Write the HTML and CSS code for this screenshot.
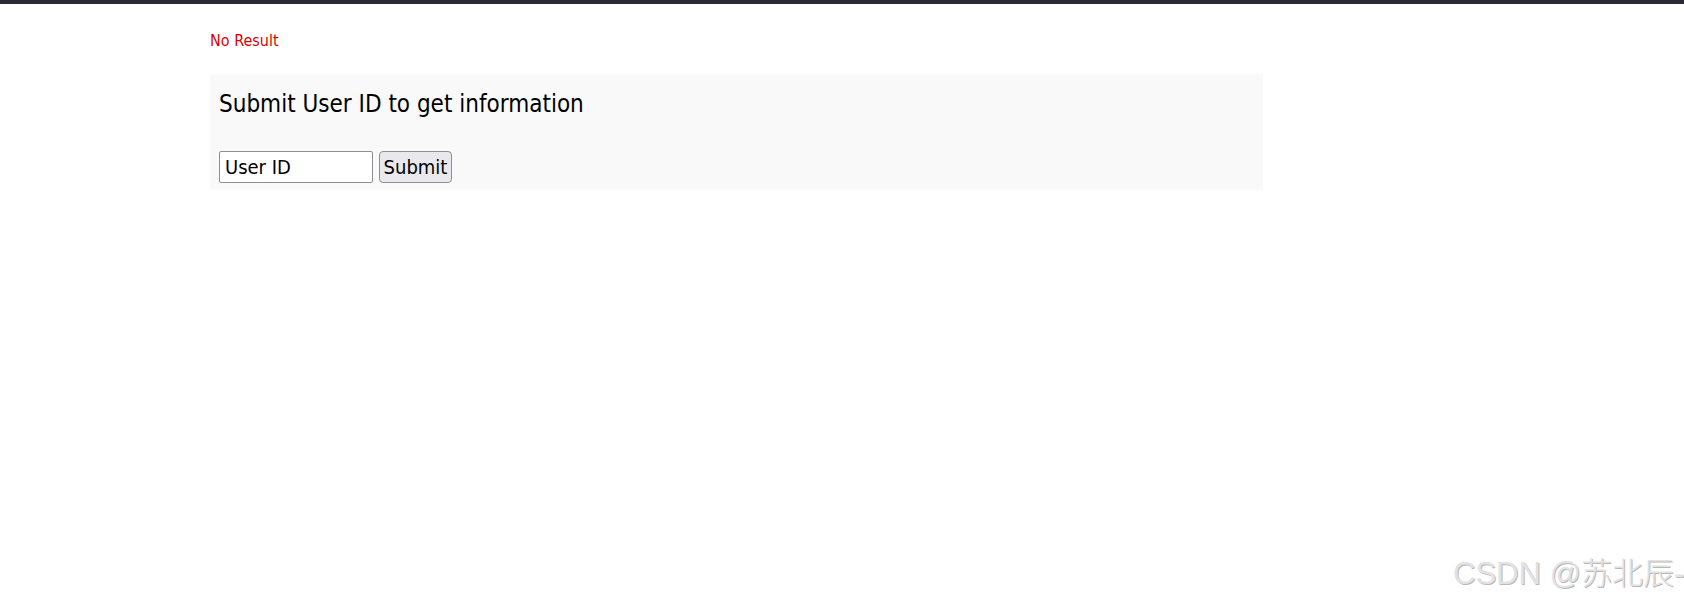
FILE: index.html
```html
<!DOCTYPE html>
<html>
<head>
<meta charset="utf-8">
<link rel="stylesheet" href="styles.css">
</head>
<body>
<div class="topbar"></div>
<main class="page">
  <p class="status">No Result</p>
  <section class="panel">
    <h2 class="title">Submit User ID to get information</h2>
    <form class="form">
      <input class="field" type="text" value="User ID">
      <button class="btn" type="button">Submit</button>
    </form>
  </section>
</main>
<div class="watermark">CSDN @苏北辰-</div>
</body>
</html>
```

FILE: styles.css
```css
html, body {
  margin: 0;
  padding: 0;
  background: #ffffff;
  height: 100%;
}
body {
  font-family: "DejaVu Sans Condensed", "DejaVu Sans", sans-serif;
  overflow: hidden;
  position: relative;
}
.topbar {
  height: 4px;
  background: #2b2a33;
}
.page {
  padding-left: 210px;
  width: 1053px;
}
.status {
  margin: 0;
  padding-top: 28px;
  height: 39px;
  box-sizing: border-box;
  color: #e00000;
  font-size: 16px;
  line-height: 17px;
}
.panel {
  margin-top: 31px;
  background: #f9f9f9;
  height: 116px;
  box-sizing: border-box;
  padding: 16px 9px 0 9px;
}
.title {
  margin: 0;
  font-weight: normal;
  font-size: 24px;
  line-height: 28px;
  color: #000;
}
.form {
  margin-top: 33px;
  display: flex;
  gap: 6px;
}
.field {
  width: 154px;
  height: 32px;
  box-sizing: border-box;
  border: 1px solid #8f8f8f;
  border-radius: 2px;
  padding: 0 5px;
  font-family: inherit;
  font-size: 20px;
  color: #000;
  background: #fff;
}
.btn {
  width: 73px;
  height: 32px;
  box-sizing: border-box;
  border: 1px solid #8f8f8f;
  border-radius: 4px;
  background: #e9e9ed;
  font-family: inherit;
  font-size: 20px;
  color: #000;
  padding: 0;
}
.watermark {
  position: absolute;
  left: 1453px;
  top: 557px;
  font-family: "Liberation Sans", "Noto Sans CJK SC", sans-serif;
  font-weight: 300;
  font-size: 31px;
  line-height: 34px;
  color: #e2e2e2;
  text-shadow: 1px 1px 0 #b9b9b9;
  white-space: nowrap;
}
```
